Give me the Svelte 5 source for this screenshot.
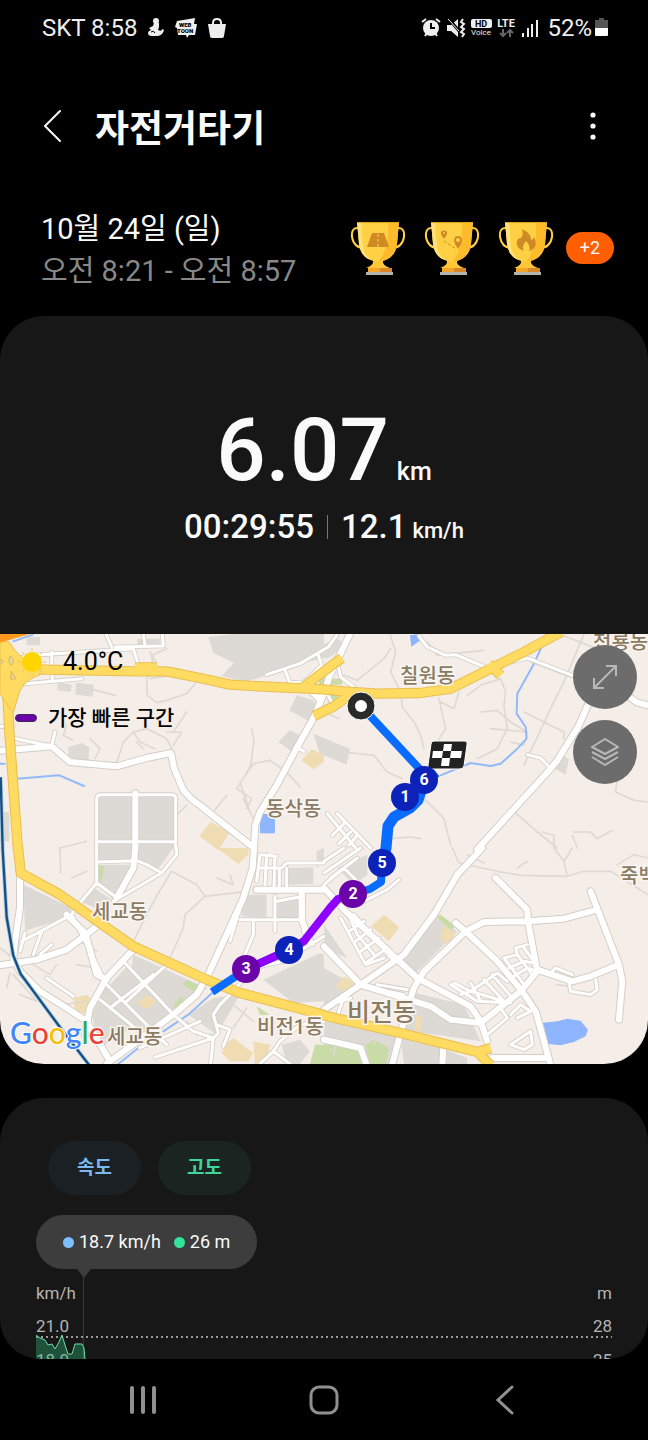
<script lang="ts">
  type Metric = "speed" | "altitude";
  type LayerName = "blocks" | "parks" | "sand" | "water" | "streams" | "trails" | "streets" | "roads" | "highways";
  type Tile = { x: number; y: number } & Record<LayerName, string>;

  let shown = $state<Record<Metric, boolean>>({ speed: true, altitude: true });

  const awards = ["road", "route", "flame"];

  const scale = [
    { speed: "21.0", altitude: "28" },
    { speed: "18.0", altitude: "25" },
    { speed: "15.0", altitude: "22" },
  ];

  // The map is drawn in four tiles of 972 x 648 units, three units to a pixel.
  const tiles: Tile[] = [
    {
      x: 0,
      y: -6,
      blocks:
        "M625 15L700 6H972V78L860 105L800 130L735 150L665 132L702 92L640 62Z M172 150L215 158L212 180L172 175Z M228 152L282 158L278 194L226 188Z M205 345L245 333L268 345L264 410L205 382Z M290 494H398V622H290Z M414 494H524V622H414Z M290 636H398V648H290Z M414 636H524V648H414Z M890 190L940 205L965 235L930 270L868 235Z M870 295L900 310L890 370L835 330Z M940 305L1050 350L1040 398L960 365Z M0 540H28V628H0Z M80 15H120V40H80Z M412 20H480V40H412Z",
      parks: "M955 140L972 130V165H960Z",
      sand: "M935 352L972 370V390L940 412L905 385Z M632 570L690 600L655 655L598 612Z",
      water: "M780 546H825V604H780Z",
      streams: "M50 440L178 430L252 462 M0 395H14 M40 28L98 8",
      trails:
        "M440 140L442 190L470 212L500 205L560 185L590 150 M240 160L300 178L345 190 M755 290L762 325L752 400L735 430 M350 392L370 330L400 300L440 290L500 320L515 350 M500 300L545 300L520 340 M560 240L520 300 M400 300L420 330L465 350 M200 280L190 310L218 325 M270 320L300 350L285 380 M640 540L680 490 M710 470L760 395L810 385L860 420L900 465 M710 470L755 500L740 530 M720 450L750 540 M730 500L760 560 M455 90L440 140 M450 140L510 130 M560 520L535 545 M180 648L260 628 M330 410L345 390 M500 50L455 70L460 110 M450 60L470 95 M430 350L410 330",
      streets:
        "M60 78L95 70L400 50L417 104 M155 60L157 150 M75 155L245 140 M318 6L335 45 M345 45L490 42L487 6 M430 6L435 40 M800 128L900 95L985 45L1010 10 M853 110L870 152L912 150L965 100L955 70 M38 318L155 343L165 300 M0 283H40 M290 648V500Q290 488 302 488H515Q527 488 527 500V648 M290 629H527 M888 345L912 358",
      roads:
        "M0 356L155 343L210 390L350 403L440 378L513 363L522 408L550 475L575 502L600 520L762 648 M406 484V648 M762 650L766 580L780 540L830 460L900 330L942 256L965 200L990 130L1050 6 M935 178L962 205",
      highways:
        "M0 108L100 112L405 118L500 118L600 138L690 158L820 165L976 172 M18 110L28 300L54 656 M910 165L985 108L1026 78 M942 252L1000 224L1056 184 M405 106H470",
    },
    {
      x: 972,
      y: -6,
      blocks: "M0 35L45 20L60 40L20 75L0 80Z M705 365L735 380L725 428L690 408Z",
      parks: "M8 188H42V208L12 212Z M-14 140H55V158H0Z",
      sand: "",
      water: "M258 10L285 6L290 25L262 44Z",
      streams: "M655 40L630 95L580 185L578 245L605 285L608 320L575 355L530 395L500 402L440 393L350 430",
      trails:
        "M198 6L215 60L200 120L230 180L235 225L270 270L290 310L300 350 M530 140L545 180L540 220L550 290L520 350L460 380 M780 6L720 150L680 230L600 400 M690 0L820 50 M620 90L740 135 M430 190L470 160L530 140 M470 240L520 235L560 270L610 300L600 340L560 330 M610 300L500 290 M345 200L365 290L340 330 M350 210L390 230L405 180 M600 240L720 300L720 320 M310 30L340 70L480 55 M60 130L100 145L180 80L200 50 M560 530L640 600L700 648 M655 600L690 610V648 M745 610L760 648 M750 600L800 600L820 620L865 595 M880 440L875 480L930 505L972 510 M300 500L360 560L380 640 M60 360L150 370L190 420L235 440 M0 240L45 260 M200 620L260 615L290 620",
      streets: "M285 12L310 45L365 70L395 68L490 108 M490 108L560 90L610 78L770 140 M610 368L650 378L680 410 M10 545L95 648 M40 545L140 648 M60 575L25 610 M80 600L45 635 M42 100L50 135L90 165 M100 610L75 640 M0 165L25 215",
      roads: "M800 200L765 280L700 385L680 410L580 520L460 652 M910 190L940 212L972 220",
      highways: "M-4 172L60 178L160 185L290 183L380 170L490 115L600 60L712 0 M495 95L530 130",
    },
    {
      x: 0,
      y: 642,
      blocks:
        "M70 110L215 180L200 210L75 248Z M290 0H398V40L330 42H290Z M414 0H520L470 70L414 45Z M300 50H395L345 160L290 110Z M240 160L275 115L335 155L310 190Z M400 320L620 420L520 500L390 400Z M330 410L385 350L530 500L460 545L420 545Z M275 500L320 400L430 520L300 600Z M860 60L940 58V108L868 110Z M730 140H800V210L725 205Z M825 150H900V215H825Z M790 395L960 315L972 320V460L880 465Z M565 500L640 450L720 440L650 560Z M845 590L900 575L930 610L900 648H860Z M972 0V40L950 60V10Z",
      parks: "M290 50L312 55L305 100L290 102Z M560 395L600 415L580 430L550 410Z M520 470L545 445L560 470L530 495Z M945 590H972V648H930Z M770 475L810 500H780Z",
      sand: "M650 0H745V20L715 48Z M220 450L260 440L278 455L270 500L225 490Z M412 465L440 440L470 460L440 485Z M680 585L700 570L760 615L745 640H690L665 615Z M760 580L810 590L800 640L765 648Z",
      water: "",
      streams: "M640 432L565 500L490 550 M415 600L355 648",
      trails:
        "M400 280L440 200L475 135L515 70L590 110L615 145L740 130 M615 145L555 200L550 240L510 330 M650 90L700 110L690 80 M180 0L182 75 M215 90L260 70 M40 380L110 460L60 440 M30 375L20 420 M100 350L150 380L170 350 M205 300L240 280L290 310 M230 350L290 360 M190 470L260 460 M0 300L40 330 M740 480L700 540 M560 520L590 560L640 560 M300 420L340 450 M350 400L400 450 M430 350L520 430 M700 470L760 520",
      streets:
        "M290 0V100 M290 42L410 38L440 50L485 75L530 20V0 M340 160L485 75 M240 165L290 105L345 145 M65 280L215 200L310 390 M215 200L235 165 M100 320L125 250 M120 320L155 290 M75 255L60 310 M370 340L520 500 M300 455L430 560 M310 400L500 590 M500 350L380 460 M520 500L580 550L640 570 M420 600L600 520 M330 480L460 380 M140 390L220 445 M780 20L770 100 M800 20L795 110 M825 25L822 115 M780 20L830 25 M780 60H840 M838 60V115 M860 60V115 M845 60L860 45H972 M825 145V250 M735 130L690 280 M910 140V250L940 290 M720 215H900 M830 160L910 145 M760 220V260L710 380 M655 555L640 500L660 470L700 430L760 360L850 340L972 265 M465 628L640 570L655 555 M640 570L632 648 M670 595L690 545L650 530 M820 610L840 580L900 530L972 520 M820 610L870 648 M780 648L820 610",
      roads:
        "M60 90V180L45 280L40 330L60 370L120 430L200 480L260 520L330 640 M0 352L110 335L200 305L290 235 M255 560L270 480L320 390L400 305 M200 200L260 260 M762 0L758 60L730 150L620 390L590 440L520 500L320 648 M770 125H972 M260 270L290 380L320 395 M406 0L400 60L350 150 M905 125V215L930 280",
      highways: "M54 -4L62 75L180 140L300 225L400 295L620 395L720 435L976 502",
    },
    {
      x: 972,
      y: 642,
      blocks:
        "M330 205L400 250L275 375L235 340Z M0 360L90 410L20 470L0 480Z M275 435L420 470L470 580L230 545Z M0 520L220 560L205 648H0Z M40 60L130 20V80L90 110Z M230 570L350 600L430 630V648H240Z M0 230L70 330L0 300Z",
      parks: "M335 205L350 200L395 235L380 245Z M0 590L95 595L120 648H0Z M125 590L150 575L195 600L185 648H135Z",
      sand: "M180 200L225 238L195 280L142 235Z M360 232L395 258L370 290L348 270Z M60 385L92 405L65 435L35 415Z M275 505H292V550H275Z",
      water: "M657 524L700 520L730 512L770 518L792 545L785 565L750 582L710 592L673 588Z",
      streams: "",
      trails:
        "M385 0L405 45L520 70L590 82L730 85L780 70L860 70L972 140 M690 0L720 40L745 0 M720 40L730 85 M580 60L610 40 M880 50L930 20L972 30 M430 20L480 45 M700 410L735 415 M290 330L320 290L310 260 M330 240L305 300 M310 490L420 510 M40 540L30 620 M120 550L105 610 M160 560L150 590",
      streets:
        "M225 95L190 125L100 170 M0 40L60 0 M0 75L110 0 M20 90L100 30 M0 110L60 60L110 110 M50 210L125 350L180 330 M70 190L100 260L150 320 M90 200L210 340 M75 250L120 220 M95 280L140 245 M110 310L165 270 M125 345L190 300 M380 410L460 460L560 465 M390 405L440 430L520 375L550 400 M410 440L440 430L540 460 M440 405L470 460 M480 395L540 460 M505 380L565 450 M540 330L600 410 M540 330L580 320L575 300L610 290 M555 360L600 340L630 345 M570 385L610 360L640 370 M580 320L625 380 M600 300L630 340 M140 420L240 440 M160 410L250 425 M380 520L365 500 M685 370L695 360L745 380 M735 400L740 430L800 440L820 425L815 395 M560 500L590 470L620 490L580 510 M490 560L550 510L530 480 M560 590L620 550L625 590L600 605L560 590 M20 470L80 450 M40 505L55 460",
      roads:
        "M475 0L400 80L330 200L240 320L110 410L0 485 M0 120L65 190L280 390L440 475L470 520L490 580 M0 295L110 410L320 475L380 515L470 525L590 430L640 370L612 220L610 185L515 90 M395 225L425 250L520 340L595 430L635 490L680 652 M425 250L300 370L270 420L245 500L205 648 M425 250L480 222L610 220L720 212L820 185 M800 130L885 350L895 400L885 515 M640 365L745 400L800 385L885 350 M505 630H670 M0 575L110 600L128 652 M358 600L355 652",
      highways: "M-4 502L230 555L460 612L500 600 M460 612L500 652",
    },
  ];

  const areaLayers: { name: LayerName; fill: string }[] = [
    { name: "blocks", fill: "#dddad5" },
    { name: "parks", fill: "#c9dba6" },
    { name: "sand", fill: "#efdcb2" },
    { name: "water", fill: "#8fb5ff" },
  ];

  const lineLayers: { name: LayerName; stroke: string; width: number; cap?: "butt" }[] = [
    { name: "trails", stroke: "#ddd9d3", width: 5 },
    { name: "streams", stroke: "#92b9fa", width: 6 },
    { name: "streets", stroke: "#d3cec7", width: 14 },
    { name: "roads", stroke: "#d3cec7", width: 24 },
    { name: "streets", stroke: "#ffffff", width: 9 },
    { name: "roads", stroke: "#ffffff", width: 18 },
    { name: "highways", stroke: "#e8be55", width: 31, cap: "butt" },
    { name: "highways", stroke: "#ffdb61", width: 25, cap: "butt" },
  ];

  const places = [
    { name: "칠원동", x: 400, y: 49 },
    { name: "천룡동", x: 593, y: 15 },
    { name: "동삭동", x: 266, y: 182 },
    { name: "세교동", x: 92, y: 285 },
    { name: "세교동", x: 107, y: 410 },
    { name: "비전1동", x: 257, y: 400 },
    { name: "비전동", x: 347, y: 387, large: true },
    { name: "죽백동", x: 620, y: 249 },
  ];

  const laps = [
    { n: 1, x: 405, y: 163 },
    { n: 6, x: 424, y: 146 },
    { n: 5, x: 382, y: 229 },
    { n: 2, x: 353, y: 260, fastest: true },
    { n: 4, x: 289, y: 316 },
    { n: 3, x: 246, y: 335, fastest: true },
  ];
</script>

<div class="screen">
  <div class="status">
    <div class="status-group">
      <span class="status-text">SKT 8:58</span>
      <svg width="18" height="22" viewBox="0 0 18 22" fill="#eee" aria-hidden="true">
        <circle cx="9" cy="4" r="3" />
        <path d="M7 6H12L12 10L11 13Q15 15 15 12L17 13Q16 18 11 19H5Q1 19 1 16Q1 14 4 13L2 11L6 9Z" />
        <path d="M4 15Q7 13 8 16" fill="none" stroke="#000" />
      </svg>
      <svg width="22" height="22" viewBox="0 0 22 22" aria-hidden="true">
        <path d="M2 4L20 1L19 7L22 7L20 18L14 18L12 21L11 18L3 18L2 11L0 10Z" fill="#eee" />
        <text x="4" y="10" class="tiny">WEB</text>
        <text x="2" y="16" class="tiny">TOON</text>
      </svg>
      <svg width="20" height="22" viewBox="0 0 20 22" aria-hidden="true">
        <path d="M1 7H19L17 19Q17 21 15 21H5Q3 21 3 19Z" fill="#eee" />
        <path d="M6 10V6Q6 2 10 2T14 6V10" fill="none" stroke="#eee" stroke-width="2" />
      </svg>
    </div>
    <div class="status-group right">
      <svg width="20" height="22" viewBox="0 0 20 22" aria-hidden="true">
        <circle cx="10" cy="11" r="8" fill="#eee" />
        <path d="M1 5L5 2M19 5L15 2M4 19L6 16M16 19L14 16" stroke="#eee" stroke-width="2" />
        <path d="M10 6V11H14" fill="none" stroke="#000" stroke-width="2" />
      </svg>
      <svg width="20" height="22" viewBox="0 0 20 22" aria-hidden="true">
        <path d="M1 8H5L12 2V20L5 14H1Z" fill="#eee" />
        <path d="M2 1L14 15" stroke="#000" stroke-width="3" />
        <path d="M2 2L13 14" stroke="#eee" stroke-width="1" />
        <path d="M17 2L15 5L18 7L15 10L18 12L15 15L18 17L16 20" fill="none" stroke="#eee" stroke-width="2" />
      </svg>
      <svg width="21" height="22" viewBox="0 0 21 22" aria-hidden="true">
        <rect y="2" width="21" height="9" rx="2" fill="#eee" />
        <text x="10" y="10" class="hd">HD</text>
        <text x="10" y="18" class="voice">Voice</text>
      </svg>
      <svg width="19" height="22" viewBox="0 0 19 22" aria-hidden="true">
        <text x="9" y="10" class="lte">LTE</text>
        <path d="M6 12V19M3 16L6 19L9 16M13 20V13M10 16L13 13L16 16" fill="none" stroke="#666" stroke-width="2" />
      </svg>
      <svg width="18" height="22" viewBox="0 0 18 22" fill="#eee" aria-hidden="true">
        <path d="M1 16H3V20H1ZM6 11H8V20H6ZM10 7H12V20H10ZM15 3H17V20H15Z" />
      </svg>
      <span class="battery">
        <span class="status-text">52%</span>
        <svg width="13" height="22" viewBox="0 0 13 22" aria-hidden="true">
          <path d="M4 1H9V3H13V11H0V3H4Z" fill="#555" />
          <path d="M0 11H13V18Q13 19 12 19H1Q0 19 0 18Z" fill="#fff" />
        </svg>
      </span>
    </div>
  </div>

  <main>
    <header>
      <button type="button" class="icon-button" aria-label="뒤로">
        <svg width="20" height="34" viewBox="0 0 20 34" fill="none" stroke="#fafafa" stroke-width="2">
          <path d="M17 2L2 17L17 32" stroke-linecap="round" stroke-linejoin="round" />
        </svg>
      </button>
      <h1>자전거타기</h1>
      <button type="button" class="icon-button" aria-label="더보기">
        <svg width="20" height="34" viewBox="0 0 20 34" fill="#fafafa">
          <circle cx="10" cy="6" r="2.6" />
          <circle cx="10" cy="17" r="2.6" />
          <circle cx="10" cy="28" r="2.6" />
        </svg>
      </button>
    </header>

    <section class="summary">
      <div class="when">
        <p>10월 24일 (일)</p>
        <p class="muted">오전 8:21 - 오전 8:57</p>
      </div>
      <div class="awards">
        {#each awards as award}
          <svg width="56" height="54" viewBox="0 0 56 54" aria-hidden="true">
            <path d="M9 7Q1 6 2 16Q4 27 14 27M47 7Q55 6 54 16Q52 27 42 27" fill="none" stroke="#ffcf45" stroke-width="2" />
            <path d="M7 1H49L47 23Q45 39 28 41Q11 39 9 23Z" fill="#ffd043" />
            <path d="M38 1H49L47 23Q45 39 28 41Q40 27 38 1Z" fill="#fdba2b" />
            <path d="M7 1H11L13 26Q15 35 21 39Q11 36 9 23Z" fill="#ffe07a" />
            <path d="M7 1H49V2H7Z" fill="#e3a51f" />
            <path d="M23 40H33Q32 44 40 47H16Q24 44 23 40Z" fill="#ffc636" />
            <path d="M18 47H42V51H18Z" fill="#f3a52a" />
            <path d="M30 47H42V51H30Z" fill="#d9852a" />
            <path d="M16 51H43V54H16Z" fill="#b5b3ab" />
            {#if award === "road"}
              <path d="M22 12H34L39 26H17Z" fill="#cf8a25" />
              <path d="M28 13V26" stroke="#ffd043" stroke-width="1" stroke-dasharray="3 2" />
            {:else if award === "route"}
              <path d="M20 18Q15 12 18 10Q20 9 22 10Q25 12 20 18ZM34 28Q28 20 31 16Q34 14 37 16Q40 20 34 28Z" fill="#cf8a25" />
              <circle cx="20" cy="12" r="1" fill="#ffd043" />
              <circle cx="34" cy="19" r="2" fill="#ffd043" />
              <path d="M20 20L32 28" stroke="#cf8a25" stroke-width="1" stroke-dasharray="3 2" />
            {:else}
              <path d="M24 8Q34 13 33 19Q36 18 36 16Q41 27 31 30Q33 25 28 20Q23 26 26 30Q17 27 19 20Q20 17 23 17Q26 13 24 8Z" fill="#cf8a25" />
            {/if}
          </svg>
        {/each}
        <span class="more">+2</span>
      </div>
    </section>

    <section class="result">
      <p class="distance">6.07<span>km</span></p>
      <div class="pace">
        <span>00:29:55</span>
        <i></i>
        <span>12.1<small>km/h</small></span>
      </div>
    </section>

    <section class="map">
      <svg class="map-canvas" viewBox="0 0 648 430" preserveAspectRatio="xMidYMid slice" role="img" aria-label="경로 지도">
        <rect width="648" height="430" fill="#f5eee8" />
        <g transform="scale(0.3333)">
          {#each areaLayers as layer}
            {#each tiles as tile}
              <path d={tile[layer.name]} transform="translate({tile.x} {tile.y})" fill={layer.fill} />
            {/each}
          {/each}
          {#each lineLayers as layer}
            {#each tiles as tile}
              <path
                d={tile[layer.name]}
                transform="translate({tile.x} {tile.y})"
                fill="none"
                stroke={layer.stroke}
                stroke-width={layer.width}
                stroke-linejoin="round"
                stroke-linecap={layer.cap ?? "round"}
              />
            {/each}
          {/each}
          <!-- interchange at the west edge -->
          <path d="M0 22L28 24Q60 84 120 90V122Q62 140 52 195L40 236L0 180Z" fill="#ffdb61" stroke="#e8be55" stroke-width="3" />
          <path d="M30 66Q48 80 34 94Q22 84 30 66ZM34 112L48 134L32 136ZM0 76L12 82L0 92Z" fill="#ddd8b0" stroke="#e2b548" stroke-width="3" />
          <path d="M0 0H90L0 26Z" fill="#ff9a1f" />
          <!-- railway -->
          <path d="M2 430L8 648L20 850L40 965L62 1020L110 1085L180 1180L268 1294" fill="none" stroke="#a9c8e8" stroke-width="12" />
          <path d="M2 430L8 648L20 850L40 965L62 1020L110 1085L180 1180L268 1294" fill="none" stroke="#17507f" stroke-width="7" />
        </g>

        {#each places as place}
          <text class="place" class:large={place.large} x={place.x} y={place.y}>{place.name}</text>
        {/each}

        <text class="google" x="10" y="410"
          ><tspan fill="#4285f4">G</tspan><tspan fill="#ea4335">o</tspan><tspan fill="#fbbc05">o</tspan><tspan
            fill="#4285f4">g</tspan
          ><tspan fill="#34a853">l</tspan><tspan fill="#ea4335">e</tspan></text
        >

        <g fill="none" stroke="#0a6cff" stroke-linejoin="round">
          <path d="M361 72L428 144" stroke-width="8" />
          <path d="M436 138L424 148L418 166L410 174L394 183L388 192L386 214L382 229" stroke-width="11" />
          <path d="M382 229L381 248L370 255L353 260" stroke-width="8" />
          <path d="M289 316L247 335L212 358" stroke-width="8" />
          <path d="M353 260L338 265L330 274L304 307L289 316L247 335" stroke="#8f00ff" stroke-width="8" />
        </g>

        <circle cx="361" cy="72" r="14" fill="#2a2a2a" stroke="#fff" stroke-width="1" />
        <circle cx="361" cy="72" r="6" fill="#fff" />

        <g transform="translate(428 106)">
          <path d="M6 1H37Q40 1 39 5L36 26Q35 29 32 29H2Q-1 29 0 25L3 4Q3 1 6 1Z" fill="#222" stroke="#fff" stroke-width="1" />
          <path d="M16 4H24L23 11H15ZM5 11H15L14 18H4ZM23 11H34L33 18H22ZM14 18H22L21 26H13Z" fill="#fff" />
        </g>

        {#each laps as lap}
          <circle cx={lap.x} cy={lap.y} r="14" fill={lap.fastest ? "#6b04a8" : "#0c22b8"} />
          <text class="lap" x={lap.x} y={lap.y + 5}>{lap.n}</text>
        {/each}
      </svg>

      <div class="legend">
        <p class="weather">
          <svg width="28" height="28" viewBox="0 0 28 28" aria-hidden="true">
            <circle cx="14" cy="14" r="10" fill="#ffd500" />
            <path
              d="M14 0V3M14 25V28M0 14H3M25 14H28M4 4L6 6M22 22L24 24M24 4L22 6M4 24L6 22"
              stroke="#e9c84a"
              stroke-width="1"
            />
          </svg>
          4.0°C
        </p>
        <p class="fastest"><i></i>가장 빠른 구간</p>
      </div>

      <div class="map-tools">
        <button type="button" aria-label="지도 확대">
          <svg width="32" height="32" viewBox="0 0 32 32" fill="none" stroke="#b8b8b8" stroke-width="2">
            <path d="M5 27L27 5M17 5H27V15M5 17V27H15" />
          </svg>
        </button>
        <button type="button" aria-label="지도 유형">
          <svg width="32" height="32" viewBox="0 0 32 32" fill="none" stroke="#b8b8b8" stroke-width="2" stroke-linejoin="round">
            <path d="M16 3L29 11L16 18L3 11ZM3 16L16 23L29 16M3 21L16 29L29 21" />
          </svg>
        </button>
      </div>
    </section>

    <section class="chart">
      <div class="chips">
        <button type="button" class="chip speed" aria-pressed={shown.speed} onclick={() => (shown.speed = !shown.speed)}>
          속도
        </button>
        <button
          type="button"
          class="chip altitude"
          aria-pressed={shown.altitude}
          onclick={() => (shown.altitude = !shown.altitude)}
        >
          고도
        </button>
      </div>

      <div class="readout">
        {#if shown.speed}<span class="value speed">18.7 km/h</span>{/if}
        {#if shown.altitude}<span class="value altitude">26 m</span>{/if}
      </div>

      <div class="plot">
        <div class="axis units"><span>km/h</span><span>m</span></div>
        {#each scale as step}
          <div class="axis step"><span>{step.speed}</span><span>{step.altitude}</span></div>
        {/each}
        {#if shown.altitude}
          <svg class="trace" width="52" height="100" viewBox="0 0 52 100" aria-hidden="true">
            <path
              d="M0 0L4 3L9 5L12 10L16 9L19 14L23 7L26 0L29 10L32 19H36L39 9H46L48 13L49 24V100H0Z"
              fill="#2dbd7d"
              fill-opacity="0.35"
            />
            <path
              d="M0 0L4 3L9 5L12 10L16 9L19 14L23 7L26 0L29 10L32 19H36L39 9H46L48 13L49 24"
              fill="none"
              stroke="#6fdcaa"
              stroke-width="1"
            />
          </svg>
        {/if}
      </div>
    </section>
  </main>

  <nav aria-label="시스템 탐색">
    <button type="button" aria-label="최근 앱">
      <svg width="32" height="32" viewBox="0 0 32 32" stroke="#909090" stroke-width="4" stroke-linecap="round">
        <path d="M5 4V28M16 4V28M27 4V28" />
      </svg>
    </button>
    <button type="button" aria-label="홈">
      <svg width="32" height="32" viewBox="0 0 32 32" fill="none" stroke="#909090" stroke-width="3">
        <rect x="3" y="3" width="26" height="26" rx="8" />
      </svg>
    </button>
    <button type="button" aria-label="뒤로 가기">
      <svg width="32" height="32" viewBox="0 0 32 32" fill="none" stroke="#909090" stroke-width="3">
        <path d="M23 3L9 16L23 29" stroke-linecap="round" />
      </svg>
    </button>
  </nav>
</div>

<style>
  :global(body) {
    margin: 0;
    background: #000;
  }

  .screen {
    display: flex;
    flex-direction: column;
    height: 100vh;
    color: #fafafa;
    background: #000;
    font-family: Roboto, "Noto Sans CJK KR", sans-serif;
  }

  p,
  h1 {
    margin: 0;
  }

  svg {
    display: block;
    flex: none;
  }

  button {
    border: 0;
    padding: 0;
    color: inherit;
    background: none;
    font: inherit;
  }

  .status {
    display: flex;
    justify-content: space-between;
    padding: 12px 40px 0 42px;
  }

  .status-group {
    display: flex;
    align-items: center;
    gap: 10px;
    height: 32px;
  }

  .status-group.right {
    gap: 5px;
  }

  .battery {
    display: flex;
    align-items: center;
    gap: 3px;
    margin-left: 3px;
  }

  .status-text {
    color: #eee;
    font-size: 24px;
    line-height: 32px;
  }

  .tiny {
    font-size: 6px;
    font-weight: 900;
  }

  .hd,
  .voice,
  .lte {
    text-anchor: middle;
    font-size: 9px;
    font-weight: 700;
  }

  .voice {
    fill: #eee;
    font-size: 8px;
    font-weight: 400;
  }

  .lte {
    fill: #eee;
    font-size: 11px;
  }

  main {
    flex: 1;
    min-height: 0;
    overflow: hidden;
    border-radius: 0 0 40px 40px;
  }

  header {
    display: flex;
    align-items: center;
    gap: 32px;
    padding: 56px 45px 0 43px;
  }

  .icon-button {
    height: 52px;
  }

  h1 {
    flex: 1;
    font-family: "Noto Sans CJK KR", Roboto, sans-serif;
    font-size: 37px;
    font-weight: 700;
    line-height: 52px;
  }

  .summary {
    display: flex;
    justify-content: space-between;
    align-items: center;
    padding: 56px 34px 24px 41px;
  }

  .when {
    font-size: 29px;
    line-height: 42px;
  }

  .muted {
    color: #888;
  }

  .awards {
    display: flex;
    align-items: center;
    gap: 18px;
    padding-bottom: 5px;
  }

  .more {
    margin-left: -6px;
    width: 48px;
    border-radius: 16px;
    background: #ff5f00;
    font-size: 18px;
    line-height: 32px;
    text-align: center;
  }

  .result {
    display: flex;
    flex-direction: column;
    align-items: center;
    gap: 4px;
    padding: 84px 0;
    border-radius: 44px 44px 0 0;
    background: #171717;
    font-weight: 500;
  }

  .distance {
    font-size: 87px;
    line-height: 100px;
  }

  .distance span {
    margin-left: 8px;
    font-size: 25px;
    line-height: 1;
  }

  .pace {
    display: flex;
    align-items: center;
    gap: 13px;
    font-size: 33px;
    line-height: 46px;
  }

  .pace i {
    width: 1px;
    height: 24px;
    background: #777;
  }

  .pace small {
    margin-left: 6px;
    font-size: 22px;
    line-height: 1;
  }

  .map {
    position: relative;
    overflow: hidden;
    border-radius: 0 0 44px 44px;
  }

  .map-canvas {
    width: 100%;
    height: auto;
  }

  .place {
    fill: #8a7b63;
    stroke: #faf5f0;
    stroke-width: 3px;
    paint-order: stroke;
    font-size: 20px;
    font-weight: 500;
  }

  .place.large {
    font-size: 25px;
  }

  .google {
    stroke: #fff;
    stroke-width: 2px;
    paint-order: stroke;
    font-family: Lato, sans-serif;
    font-size: 30px;
    font-weight: 500;
  }

  .lap {
    fill: #fff;
    font-size: 16px;
    font-weight: 700;
    text-anchor: middle;
  }

  .legend {
    position: absolute;
    top: 12px;
    left: 15px;
    color: #000;
  }

  .weather {
    display: flex;
    align-items: center;
    gap: 17px;
    padding-left: 3px;
    font-size: 25px;
    line-height: 32px;
  }

  .fastest {
    display: flex;
    align-items: center;
    gap: 11px;
    margin-top: 24px;
    font-size: 21px;
    font-weight: 500;
    line-height: 32px;
  }

  .fastest i {
    box-sizing: border-box;
    width: 22px;
    height: 8px;
    border: 1px solid #3b2a55;
    border-radius: 4px;
    background: #6b04a8;
  }

  .map-tools {
    position: absolute;
    top: 11px;
    right: 11px;
    display: grid;
    gap: 11px;
  }

  .map-tools button {
    display: grid;
    place-items: center;
    width: 64px;
    height: 64px;
    border-radius: 50%;
    background: #6c6c6c;
  }

  .chart {
    margin-top: 34px;
    padding: 43px 36px;
    border-radius: 44px 44px 0 0;
    background: #171717;
  }

  .chips {
    display: flex;
    gap: 17px;
    padding-left: 12px;
  }

  .chip {
    width: 93px;
    border-radius: 27px;
    font-size: 19px;
    font-weight: 700;
    line-height: 54px;
  }

  .chip.speed {
    color: #7cb8ee;
    background: #1b2024;
  }

  .chip.altitude {
    color: #3ed598;
    background: #1a2521;
  }

  .chip[aria-pressed="false"] {
    opacity: 0.5;
  }

  .readout {
    position: relative;
    display: flex;
    gap: 13px;
    width: fit-content;
    margin-top: 20px;
    padding: 0 27px;
    border-radius: 27px;
    background: #3d3d3d;
    font-size: 18px;
    line-height: 54px;
  }

  .readout::before {
    content: "";
    position: absolute;
    top: 54px;
    left: 41px;
    border: 7px solid transparent;
    border-top: 9px solid #3d3d3d;
    border-bottom: 0;
  }

  .readout::after {
    content: "";
    position: absolute;
    top: 54px;
    left: 47px;
    width: 1px;
    height: 200px;
    background: #3a3a3a;
  }

  .value {
    display: flex;
    align-items: center;
    gap: 5px;
  }

  .value::before {
    content: "";
    width: 11px;
    height: 11px;
    border-radius: 50%;
    background: #7cc0ff;
  }

  .value.altitude::before {
    background: #33e39a;
  }

  .plot {
    position: relative;
    padding-top: 13px;
  }

  .axis {
    display: flex;
    justify-content: space-between;
    color: #b4b4b4;
    font-size: 17px;
    line-height: 22px;
  }

  .axis.step {
    box-sizing: border-box;
    height: 34px;
    padding-top: 11px;
    background: radial-gradient(circle at 1px 1px, #999 1px, transparent 1px) 0 100% / 5px 2px repeat-x;
  }

  .trace {
    position: absolute;
    top: 66px;
    left: 0;
  }

  nav {
    display: flex;
    justify-content: space-around;
    padding: 0 52px;
  }

  nav button {
    display: grid;
    place-items: center;
    width: 80px;
    height: 81px;
  }
</style>
